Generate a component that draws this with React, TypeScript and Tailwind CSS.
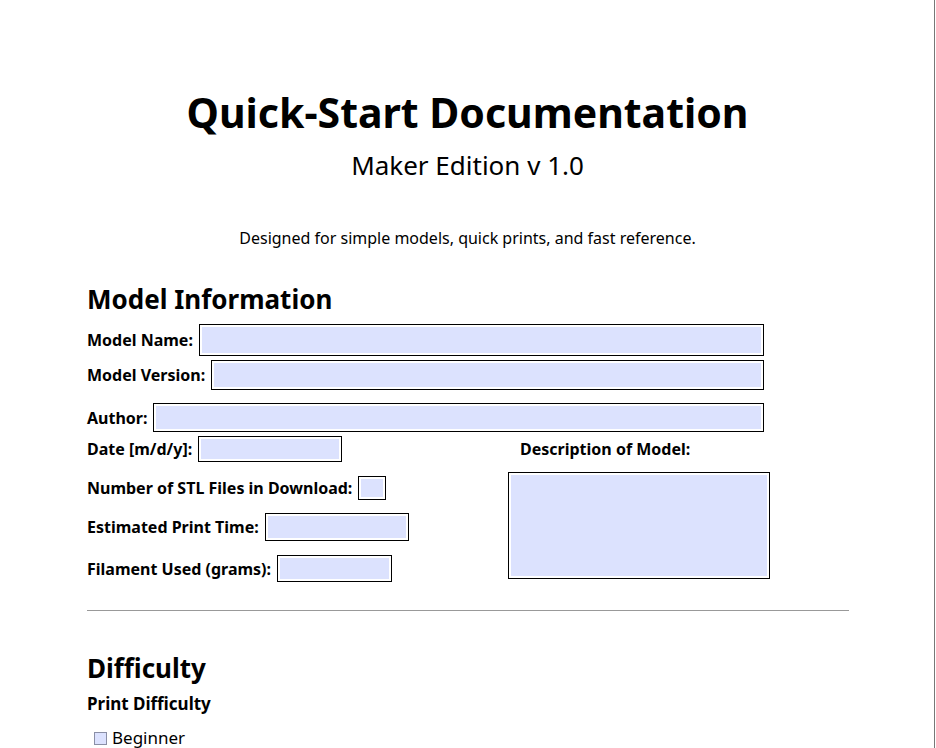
const dv = "font-[family-name:'DejaVu_Sans',sans-serif]";

function Box({ w, h }: { w: string; h: string }) {
  return (
    <div className={`border border-black bg-white p-[2px] ${w} ${h} shrink-0`}>
      <div className="w-full h-full bg-[#dce2fe]" />
    </div>
  );
}

function Row({ label, w, h, className = "" }: { label: string; w: string; h: string; className?: string }) {
  return (
    <div className={`flex items-center ${className}`}>
      <span className="font-[family-name:'DejaVu_Sans',sans-serif] font-bold text-[16px] mr-[6px]">{label}</span>
      <Box w={w} h={h} />
    </div>
  );
}

export default function App() {
  return (
    <div className="w-[936px] h-[748px] overflow-hidden bg-white text-black font-[family-name:'Liberation_Sans',Arial,sans-serif]">
      <div className="w-[935px] h-full border-r border-[#777] pl-[87px] pr-[86px]">
        <h1 className="pt-[88px] text-center font-bold text-[41px] leading-[48px]">Quick-Start Documentation</h1>
        <div className="mt-[14px] text-center text-[26px] leading-[30px]">Maker Edition v 1.0</div>
        <p className="font-[family-name:'DejaVu_Sans',sans-serif] mt-[48px] text-center text-[16px] leading-[20px]">
          Designed for simple models, quick prints, and fast reference.
        </p>
        <h2 className="mt-[36px] font-bold text-[26px] leading-[30px]">Model Information</h2>
        <div className="w-[677px]">
          <Row className="mt-[10px]" label="Model Name:" w="flex-1" h="h-[32px]" />
          <Row className="mt-[4px]" label="Model Version:" w="flex-1" h="h-[30px]" />
          <Row className="mt-[13px]" label="Author:" w="flex-1" h="h-[29px]" />
        </div>
        <div className="flex mt-[4px]">
          <div className="w-[421px]">
            <Row label="Date [m/d/y]:" w="w-[144px]" h="h-[26px]" />
            <Row className="mt-[14px]" label="Number of STL Files in Download:" w="w-[28px]" h="h-[24px]" />
            <Row className="mt-[13px]" label="Estimated Print Time:" w="w-[144px]" h="h-[28px]" />
            <Row className="mt-[14px]" label="Filament Used (grams):" w="w-[115px]" h="h-[27px]" />
          </div>
          <div className="w-[262px]">
            <div className="font-[family-name:'DejaVu_Sans',sans-serif] font-bold text-[16px] leading-[20px] mt-[3px] ml-[12px]">Description of Model:</div>
            <div className="mt-[13px]">
              <Box w="w-[262px]" h="h-[107px]" />
            </div>
          </div>
        </div>
        <hr className="mt-[28px] border-t border-[#999] w-[762px]" />
        <h2 className="mt-[42px] font-bold text-[26px] leading-[30px]">Difficulty</h2>
        <div className="font-[family-name:'DejaVu_Sans',sans-serif] mt-[10px] font-bold text-[17px] leading-[22px]">Print Difficulty</div>
        <div className="mt-[13px] ml-[7px] flex items-center gap-[5px]">
          <div className="w-[13px] h-[13px] border border-[#8a8fa6] bg-[#dce2fe]" />
          <span className="font-[family-name:'DejaVu_Sans',sans-serif] text-[17px] leading-[20px]">Beginner</span>
        </div>
      </div>
    </div>
  );
}
